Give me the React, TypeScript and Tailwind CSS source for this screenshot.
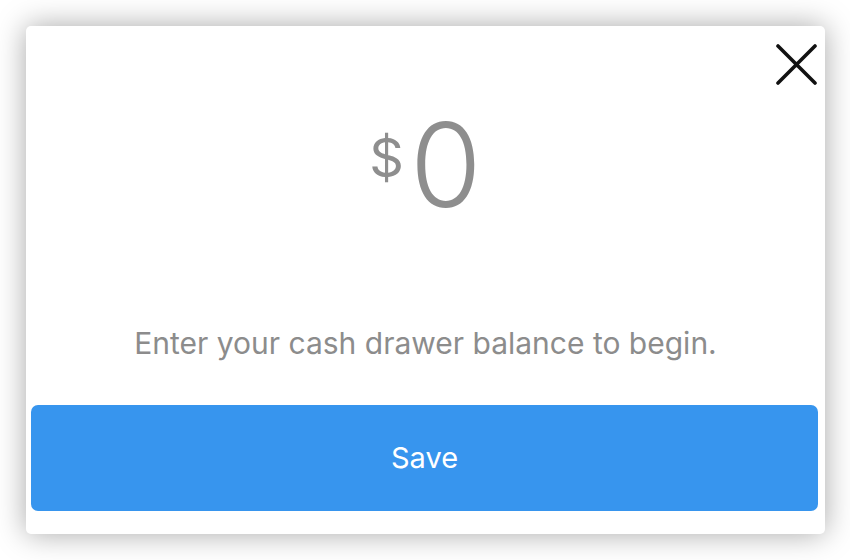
export default function App() {
  return (
    <div className="w-[850px] h-[560px] bg-white pt-[26px] pl-[26px] overflow-hidden" style={{ fontFamily: "Inter, Roboto, sans-serif" }}>
      <div className="relative w-[799px] h-[508px] bg-white rounded-[5px] shadow-[0_0_30px_rgba(0,0,0,0.35)] flex flex-col items-center">
        <button className="absolute top-[18px] right-[8px] w-[41px] h-[41px]">
          <svg width="41" height="41" viewBox="0 0 41 41" fill="none" stroke="#111" strokeWidth="3.6" strokeLinecap="round">
            <path d="M2 2L39 39M39 2L2 39" />
          </svg>
        </button>

        <div className="mt-[81px] flex items-start text-[#8e8e8e]">
          <span className="mt-[24px] mr-[6px] text-[54px] leading-none">$</span>
          <span className="text-[116px] leading-none font-light">0</span>
        </div>

        <p className="mt-[105px] text-[30px] leading-none text-[#8c8c8c]">Enter your cash drawer balance to begin.</p>

        <button className="mt-auto mb-[23px] ml-[-2px] w-[787px] h-[106px] rounded-[7px] bg-[#3795ee] text-white text-[29px]">
          Save
        </button>
      </div>
    </div>
  );
}
